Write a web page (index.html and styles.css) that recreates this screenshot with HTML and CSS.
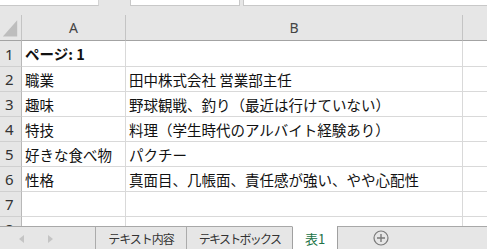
FILE: index.html
```html
<!DOCTYPE html>
<html lang="ja">
<head>
  <meta charset="UTF-8">
  <title>表1</title>
  <link rel="stylesheet" href="styles.css">
</head>
<body>
  <div class="sheet">
    <div class="topbar">
      <div class="box box-name"></div>
      <div class="box box-mid"></div>
      <div class="box box-formula"></div>
    </div>

    <div class="grid">
      <div class="hd corner">
        <svg width="22" height="26" viewBox="0 0 22 26"><polygon points="18,5 18,22 3,22" fill="#bdbdbd"/></svg>
      </div>
      <div class="hd col">A</div>
      <div class="hd col">B</div>
      <div class="hd col last"></div>

      <div class="rh">1</div><div class="c bold">ページ: 1</div><div class="c"></div><div class="c last"></div>
      <div class="rh">2</div><div class="c">職業</div><div class="c">田中株式会社 営業部主任</div><div class="c last"></div>
      <div class="rh">3</div><div class="c">趣味</div><div class="c">野球観戦、釣り（最近は行けていない）</div><div class="c last"></div>
      <div class="rh">4</div><div class="c">特技</div><div class="c">料理（学生時代のアルバイト経験あり）</div><div class="c last"></div>
      <div class="rh">5</div><div class="c">好きな食べ物</div><div class="c">パクチー</div><div class="c last"></div>
      <div class="rh">6</div><div class="c">性格</div><div class="c">真面目、几帳面、責任感が強い、やや心配性</div><div class="c last"></div>
      <div class="rh">7</div><div class="c"></div><div class="c"></div><div class="c last"></div>
      <div class="rh">8</div><div class="c"></div><div class="c"></div><div class="c last"></div>
    </div>

    <div class="tabbar">
      <div class="nav">
        <svg width="8" height="10" viewBox="0 0 8 10" class="arrow-l"><polygon points="6,1 6,9 1,5" fill="#c4c4c4"/></svg>
        <svg width="8" height="10" viewBox="0 0 8 10" class="arrow-r"><polygon points="2,1 2,9 7,5" fill="#c4c4c4"/></svg>
      </div>
      <div class="tab tab-1">テキスト内容</div>
      <div class="tab tab-2">テキストボックス</div>
      <div class="tab active">表1</div>
      <div class="tab add">
        <svg width="16" height="16" viewBox="0 0 16 16">
          <circle cx="8" cy="8" r="7" fill="none" stroke="#7a7a7a" stroke-width="1.2"/>
          <path d="M8 4v8M4 8h8" stroke="#7a7a7a" stroke-width="1.4"/>
        </svg>
      </div>
      <div class="tab rest"></div>
    </div>
  </div>
</body>
</html>
```

FILE: styles.css
```css
body {
  margin: 0;
  padding: 0;
  background-color: #e6e6e6;
  font-family: 'Noto Sans CJK JP', 'Noto Sans', sans-serif;
  color: #222;
}
.sheet {
  width: 487px;
  height: 249px;
  overflow: hidden;
  display: flex;
  flex-direction: column;
}
.topbar {
  height: 15px;
  display: flex;
  align-items: flex-start;
  flex-shrink: 0;
}
.box {
  height: 5px;
  background-color: #fff;
  border-bottom: 1px solid #c8c8c8;
}
.box-name {
  width: 98px;
  border-right: 1px solid #d4d4d4;
}
.box-mid {
  width: 108px;
  margin-left: 31px;
  border-left: 1px solid #c8c8c8;
  border-right: 1px solid #c8c8c8;
}
.box-formula {
  flex: 1;
  margin-left: 3px;
  border-left: 1px solid #c8c8c8;
}
.grid {
  height: 211px;
  overflow: hidden;
  flex-shrink: 0;
  display: grid;
  grid-template-columns: 22px 104px 337px 1fr;
  grid-template-rows: 26px 26px repeat(7, 25px);
  background-color: #fff;
}
.grid > div {
  box-sizing: border-box;
  overflow: hidden;
  white-space: nowrap;
}
.hd {
  background-color: #e6e6e6;
  border-right: 1px solid #c4c4c4;
  border-bottom: 1px solid #a3a3a3;
  display: flex;
  align-items: center;
  justify-content: center;
  font-family: 'Noto Sans', sans-serif;
  font-size: 14px;
  color: #444;
}
.corner {
  padding: 0;
}
.corner svg {
  display: block;
}
.rh {
  background-color: #e6e6e6;
  border-right: 1px solid #b8b8b8;
  border-bottom: 1px solid #d0d0d0;
  display: flex;
  align-items: center;
  padding-left: 5px;
  font-family: 'Noto Sans', sans-serif;
  font-size: 15px;
  color: #333;
}
.c {
  border-right: 1px solid #d9d9d9;
  border-bottom: 1px solid #d9d9d9;
  display: flex;
  align-items: center;
  padding-left: 3px;
  font-size: 14.5px;
  color: #111;
}
.bold {
  font-weight: 700;
}
.last {
  border-right: none;
}
.tabbar {
  flex: 1;
  display: flex;
  background-color: #e6e6e6;
}
.tabbar > div {
  box-sizing: border-box;
  border-top: 1px solid #a8a8a8;
  height: 23px;
}
.nav {
  width: 95px;
  position: relative;
}
.nav svg {
  position: absolute;
  top: 7px;
}
.arrow-l {
  left: 18px;
}
.arrow-r {
  left: 46px;
}
.tab {
  border-left: 1px solid #ababab;
  display: flex;
  align-items: center;
  justify-content: center;
  font-size: 12px;
  letter-spacing: -1px;
  color: #333;
}
.tab-1 {
  width: 91px;
}
.tab-2 {
  width: 106px;
  letter-spacing: -1.7px;
}
.tab.active {
  width: 45px;
  background-color: #fff;
  border-top-color: #fff;
  border-left-color: #a0a0a0;
  color: #217346;
  font-size: 13px;
  letter-spacing: 0;
}
.tab.add {
  width: 86px;
  border-left-color: #a0a0a0;
}
.tab.add svg {
  display: block;
}
.tab.rest {
  flex: 1;
  border-left: none;
}
```
